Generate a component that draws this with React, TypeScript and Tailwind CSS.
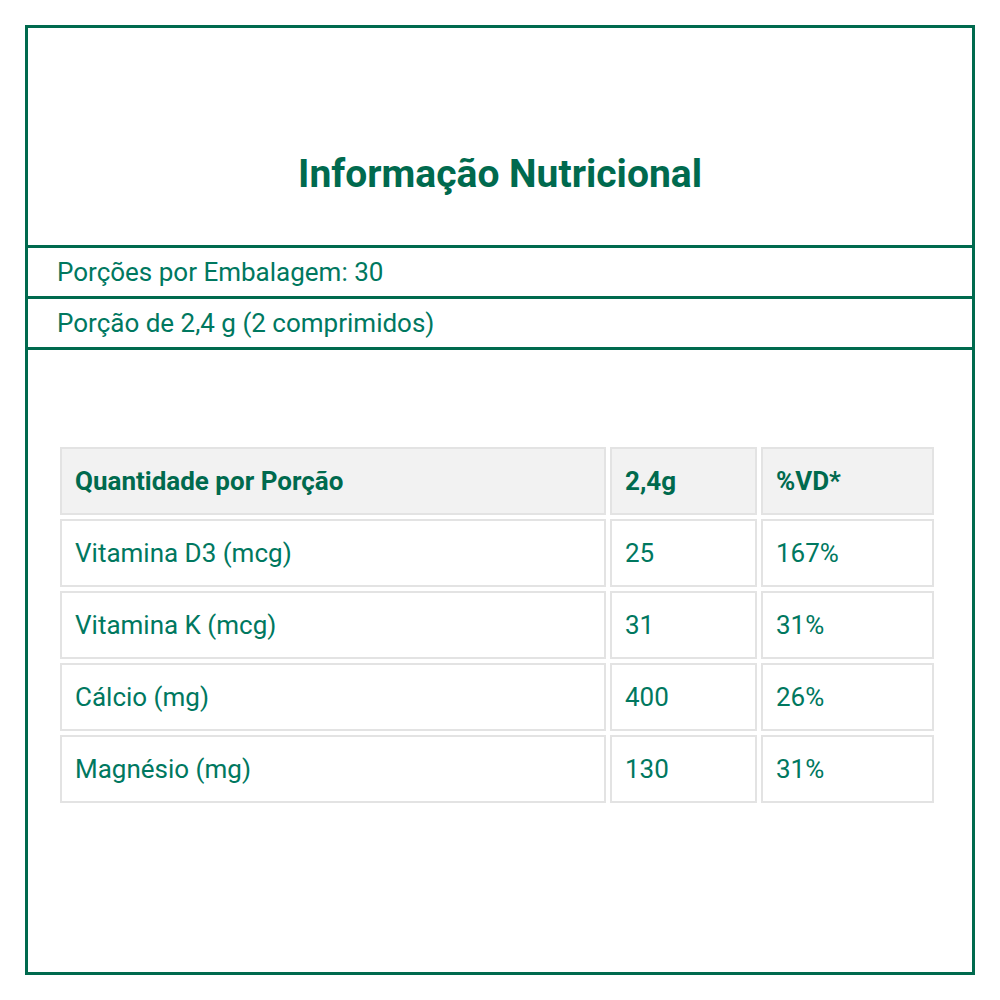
import React from "react";

const rows = [
  ["Vitamina D3 (mcg)", "25", "167%"],
  ["Vitamina K (mcg)", "31", "31%"],
  ["Cálcio (mg)", "400", "26%"],
  ["Magnésio (mg)", "130", "31%"],
];

export default function App() {
  return (
    <div className="w-[1000px] h-[1000px] bg-white pt-[25px] pl-[25px]" style={{ fontFamily: "Roboto, 'Liberation Sans', sans-serif" }}>
      <div className="w-[950px] h-[950px] border-[3px] border-[#006a4e] flex flex-col">
        <div className="h-[217px] flex justify-center pt-[127px]">
          <h1 className="text-[39px] font-bold text-[#006a4e] leading-[39px]">Informação Nutricional</h1>
        </div>
        <div className="h-[51px] border-t-[3px] border-[#006a4e] flex items-center pl-[29px] text-[26px] text-[#00785f]">
          Porções por Embalagem: 30
        </div>
        <div className="h-[51px] border-t-[3px] border-[#006a4e] flex items-center pl-[29px] text-[26px] text-[#00785f]">
          Porção de 2,4 g (2 comprimidos)
        </div>
        <div className="border-t-[3px] border-[#006a4e] pt-[97px] pl-[32px]">
          <div className="grid grid-cols-[546px_147px_173px] gap-[4px]">
            {["Quantidade por Porção", "2,4g", "%VD*"].map((h) => (
              <div key={h} className="h-[68px] bg-[#f2f2f2] border-2 border-[#e3e3e3] flex items-center pl-[13px] text-[26px] font-bold text-[#006a4e]">
                {h}
              </div>
            ))}
            {rows.flat().map((c, i) => (
              <div key={i} className="h-[68px] bg-white border-2 border-[#e3e3e3] flex items-center pl-[13px] text-[26px] text-[#00785f]">
                {c}
              </div>
            ))}
          </div>
        </div>
      </div>
    </div>
  );
}
